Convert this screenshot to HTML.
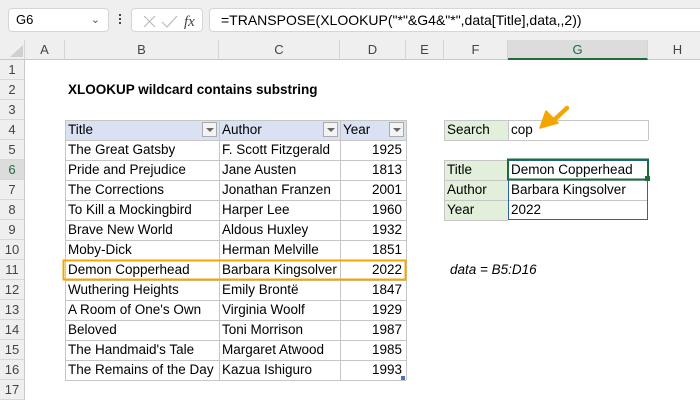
<!DOCTYPE html>
<html><head><meta charset="utf-8"><style>
*{box-sizing:border-box;margin:0;padding:0}
body{width:700px;height:400px;overflow:hidden;background:#fff;font-family:"Liberation Sans",sans-serif;font-size:13.5px;color:#000;position:relative}
.a{position:absolute}
.c{position:absolute;height:20px;line-height:20px;padding-left:3px;white-space:nowrap;overflow:hidden}
.r{text-align:right;padding-right:4px}
.hd{position:absolute;top:40px;height:20px;line-height:20px;text-align:center;color:#444;font-size:13px;border-right:1px solid #d4d4d4;border-bottom:1px solid #c8c8c8;background:#efefef}
.rh{position:absolute;left:0;width:25px;height:20px;line-height:20px;text-align:center;color:#444;font-size:13px;background:#efefef;border-bottom:1px solid #d8d8d8;border-right:1px solid #c8c8c8}
.dd{position:absolute;width:15px;height:15px;border:1px solid #aaa;background:#f3f3f3;top:2px}
.dd:after{content:"";position:absolute;left:3px;top:5px;border-left:4px solid transparent;border-right:4px solid transparent;border-top:4px solid #666}
</style></head><body>
<div class="a" style="left:0;top:0;width:700px;height:40px;background:#efefef"></div>
<div class="a" style="left:8px;top:8px;width:101px;height:24px;background:#fff;border:1px solid #d6d6d6;border-radius:4px;padding-left:7px;line-height:22px;font-size:13px">G6<span style="position:absolute;right:8px;top:0;color:#555;font-size:11px">&#8964;</span></div>
<div class="a" style="left:119px;top:14px;width:2px;height:2px;background:#444;box-shadow:0 4px 0 #444,0 8px 0 #444"></div>
<div class="a" style="left:131px;top:8px;width:72px;height:24px;background:#fff;border:1px solid #d6d6d6;border-radius:4px">
<svg width="72" height="24" style="position:absolute;left:0;top:0"><path d="M12 7 L23 18 M23 7 L12 18" stroke="#bbb" stroke-width="1.2"/><path d="M30 13 L35 18 L45 7" stroke="#bbb" stroke-width="1.2" fill="none"/><text x="52" y="17" font-family="Liberation Serif" font-style="italic" font-size="15" fill="#444">fx</text></svg></div>
<div class="a" style="left:209px;top:8px;width:495px;height:24px;background:#fff;border:1px solid #d6d6d6;border-radius:4px;padding-left:11px;line-height:22px;font-size:14px">=TRANSPOSE(XLOOKUP("*"&amp;G4&amp;"*",data[Title],data,,2))</div>
<div class="hd" style="left:0;width:25px"></div>
<div class="a" style="left:10px;top:45px;border-left:13px solid transparent;border-bottom:12px solid #d0d0d0"></div>
<div class="hd" style="left:25px;width:40px">A</div>
<div class="hd" style="left:65px;width:154px">B</div>
<div class="hd" style="left:219px;width:121px">C</div>
<div class="hd" style="left:340px;width:66px">D</div>
<div class="hd" style="left:406px;width:38px">E</div>
<div class="hd" style="left:444px;width:64px">F</div>
<div class="hd" style="left:508px;width:140px;background:#dcdcdc;color:#1e6b3c;border-bottom:2px solid #1e6b3c">G</div>
<div class="hd" style="left:648px;width:60px">H</div>
<div class="rh" style="top:60px">1</div><div class="rh" style="top:80px">2</div><div class="rh" style="top:100px">3</div><div class="rh" style="top:120px">4</div><div class="rh" style="top:140px">5</div><div class="rh" style="top:160px;background:#dcdcdc;color:#1e6b3c">6</div><div class="rh" style="top:180px">7</div><div class="rh" style="top:200px">8</div><div class="rh" style="top:220px">9</div><div class="rh" style="top:240px">10</div><div class="rh" style="top:260px">11</div><div class="rh" style="top:280px">12</div><div class="rh" style="top:300px">13</div><div class="rh" style="top:320px">14</div><div class="rh" style="top:340px">15</div><div class="rh" style="top:360px">16</div><div class="rh" style="top:380px">17</div>
<div class="c" style="left:65px;top:80px;font-weight:bold">XLOOKUP wildcard contains substring</div>
<div class="a" style="left:65px;top:120px;width:341px;height:20px;background:#d9e1f2"></div>
<div class="a" style="left:445px;top:121px;width:63px;height:19px;background:#e2efda"></div>
<div class="a" style="left:445px;top:161px;width:63px;height:59px;background:#e2efda"></div>
<svg class="a" style="left:0;top:0" width="700" height="400">
<g stroke="#c6c6c6" stroke-width="1">
<path d="M65.5 120V380 M219.5 120V380 M340.5 120V380 M406.5 120V380"/>
<path d="M65 120.5H406 M65 140.5H406 M65 160.5H406 M65 180.5H406 M65 200.5H406 M65 220.5H406 M65 240.5H406 M65 260.5H406 M65 280.5H406 M65 300.5H406 M65 320.5H406 M65 340.5H406 M65 360.5H406 M65 380.5H406"/>
<path d="M444.5 120V140 M508.5 120V140 M648.5 120V140 M444 120.5H648 M444 140.5H648"/>
<path d="M444.5 160V220 M508.5 160V220 M444 160.5H508 M444 180.5H648 M444 200.5H648 M444 220.5H508"/>
</g>
<rect x="63.5" y="260.5" width="342" height="19" fill="none" stroke="#f5a500" stroke-width="2"/>
<rect x="508.5" y="160.5" width="139" height="59" fill="none" stroke="#2f5fb3" stroke-width="1"/>
<rect x="508" y="159.5" width="140" height="20" fill="none" stroke="#1e6b3c" stroke-width="2"/>
<rect x="645" y="176" width="5" height="5" fill="#1e6b3c"/>
<rect x="401" y="376" width="4" height="4" fill="#4a6fc0"/>
<path d="M553 121 L567 108" stroke="#f5a500" stroke-width="4.5" stroke-linecap="round"/>
<path d="M540 128 L546 111 L558 123 Z" fill="#f5a500" stroke="#f5a500" stroke-width="1.5" stroke-linejoin="round"/>
</svg>
<div class="c" style="left:65px;top:120px">Title</div><div class="dd" style="left:202px;top:122px"></div>
<div class="c" style="left:219px;top:120px">Author</div><div class="dd" style="left:323px;top:122px"></div>
<div class="c" style="left:340px;top:120px">Year</div><div class="dd" style="left:389px;top:122px"></div>
<div class="c" style="left:65px;top:140px">The Great Gatsby</div><div class="c" style="left:219px;top:140px">F. Scott Fitzgerald</div><div class="c r" style="left:340px;top:140px;width:66px">1925</div>
<div class="c" style="left:65px;top:160px">Pride and Prejudice</div><div class="c" style="left:219px;top:160px">Jane Austen</div><div class="c r" style="left:340px;top:160px;width:66px">1813</div>
<div class="c" style="left:65px;top:180px">The Corrections</div><div class="c" style="left:219px;top:180px">Jonathan Franzen</div><div class="c r" style="left:340px;top:180px;width:66px">2001</div>
<div class="c" style="left:65px;top:200px">To Kill a Mockingbird</div><div class="c" style="left:219px;top:200px">Harper Lee</div><div class="c r" style="left:340px;top:200px;width:66px">1960</div>
<div class="c" style="left:65px;top:220px">Brave New World</div><div class="c" style="left:219px;top:220px">Aldous Huxley</div><div class="c r" style="left:340px;top:220px;width:66px">1932</div>
<div class="c" style="left:65px;top:240px">Moby-Dick</div><div class="c" style="left:219px;top:240px">Herman Melville</div><div class="c r" style="left:340px;top:240px;width:66px">1851</div>
<div class="c" style="left:65px;top:260px">Demon Copperhead</div><div class="c" style="left:219px;top:260px">Barbara Kingsolver</div><div class="c r" style="left:340px;top:260px;width:66px">2022</div>
<div class="c" style="left:65px;top:280px">Wuthering Heights</div><div class="c" style="left:219px;top:280px">Emily Brontë</div><div class="c r" style="left:340px;top:280px;width:66px">1847</div>
<div class="c" style="left:65px;top:300px">A Room of One's Own</div><div class="c" style="left:219px;top:300px">Virginia Woolf</div><div class="c r" style="left:340px;top:300px;width:66px">1929</div>
<div class="c" style="left:65px;top:320px">Beloved</div><div class="c" style="left:219px;top:320px">Toni Morrison</div><div class="c r" style="left:340px;top:320px;width:66px">1987</div>
<div class="c" style="left:65px;top:340px">The Handmaid's Tale</div><div class="c" style="left:219px;top:340px">Margaret Atwood</div><div class="c r" style="left:340px;top:340px;width:66px">1985</div>
<div class="c" style="left:65px;top:360px;width:154px">The Remains of the Day</div><div class="c" style="left:219px;top:360px">Kazua Ishiguro</div><div class="c r" style="left:340px;top:360px;width:66px">1993</div>
<div class="c" style="left:444px;top:120px">Search</div><div class="c" style="left:508px;top:120px">cop</div>
<div class="c" style="left:444px;top:160px">Title</div><div class="c" style="left:508px;top:160px">Demon Copperhead</div>
<div class="c" style="left:444px;top:180px">Author</div><div class="c" style="left:508px;top:180px">Barbara Kingsolver</div>
<div class="c" style="left:444px;top:200px">Year</div><div class="c" style="left:508px;top:200px">2022</div>
<div class="c" style="left:447px;top:260px;font-style:italic">data = B5:D16</div>
</body></html>
